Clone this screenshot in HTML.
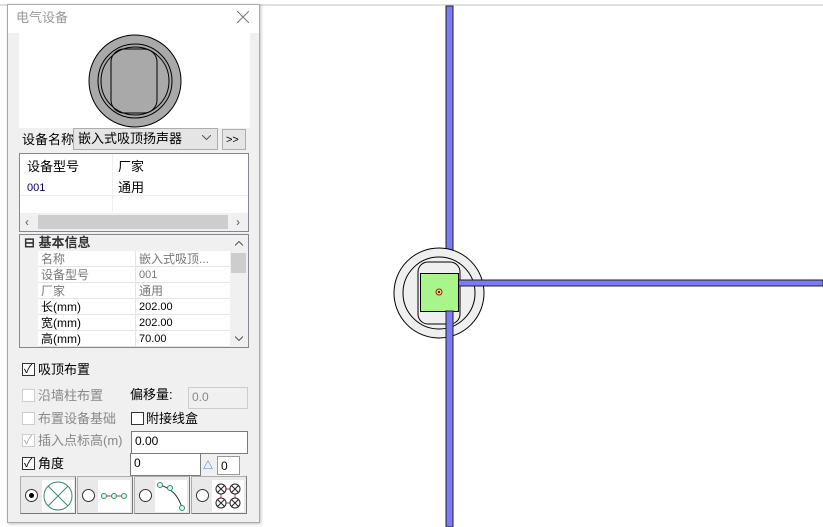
<!DOCTYPE html>
<html><head><meta charset="utf-8"><style>
*{margin:0;padding:0;box-sizing:border-box}
body{width:823px;height:527px;background:#fff;position:relative;overflow:hidden;font-family:"Liberation Sans","Noto Sans CJK SC",sans-serif;font-size:12px;color:#000}
.a{position:absolute}
.t{position:absolute;white-space:nowrap;line-height:16px}
.cb{position:absolute;width:13px;height:13px;border:1px solid #333;background:#fff}
.cbd{border-color:#ccc}
.inp{position:absolute;background:#fff;border:1px solid #7a7a7a;padding:2px 3px;font-size:12px;line-height:14px}
.btn{position:absolute;top:476px;height:38px;background:#e9e9e9;border:1px solid #adadad;border-right-color:#777;border-bottom-color:#777}
.rad{position:absolute;left:4px;top:12px;width:13px;height:13px;border:1px solid #333;border-radius:50%;background:#fff}
.row{position:absolute;left:18px;width:192px;height:16px;border-bottom:1px solid #e4e4e4;background:#fff}
</style></head><body>
<div class="a" style="left:0;top:4px;width:823px;height:2px;background:#e0e0e0"></div>
<!-- canvas drawing -->
<svg class="a" style="left:380px;top:0" width="443" height="527">
<rect x="66" y="6" width="7" height="521" fill="#7b7bf7" stroke="#222" stroke-width="1"/>
<circle cx="59" cy="293" r="45" fill="#efefef" stroke="#000" stroke-width="1"/>
<circle cx="59" cy="293" r="36" fill="none" stroke="#000" stroke-width="1"/>
<rect x="38" y="262" width="42" height="62" rx="10" fill="none" stroke="#000"/>
<rect x="73" y="280" width="370" height="6" fill="#7b7bf7" stroke="#222" stroke-width="1"/>
<rect x="40.5" y="273.5" width="38" height="38" fill="#a8f58c" stroke="#000"/>
<rect x="66" y="311" width="7" height="216" fill="#7b7bf7" stroke="#222" stroke-width="1"/>
<circle cx="59" cy="292" r="3" fill="none" stroke="#d00"/>
<circle cx="59" cy="292" r="1" fill="#000"/>
</svg>
<!-- panel -->
<div class="a" style="left:7px;top:4px;width:253px;height:519px;background:#f0f0f0;border:1px solid #aaa;box-shadow:1px 1px 3px rgba(0,0,0,.25)"></div>
<div class="a" style="left:8px;top:5px;width:251px;height:28px;background:#fff"></div>
<div class="t" style="left:16px;top:10px;font-size:13px;color:#999">电气设备</div>
<svg class="a" style="left:237px;top:11px" width="12" height="12"><path d="M0 0L12 12M12 0L0 12" stroke="#777" stroke-width="1"/></svg>
<div class="a" style="left:19px;top:33px;width:231px;height:95px;background:#fff"></div>
<svg class="a" style="left:88px;top:34px" width="94" height="94">
<circle cx="47" cy="47" r="46" fill="#a9a9a9" stroke="#000"/>
<circle cx="47" cy="47" r="37" fill="none" stroke="#000"/>
<circle cx="47" cy="47" r="34" fill="none" stroke="#000"/>
<rect x="23" y="15" width="46" height="64" rx="13" fill="none" stroke="#000"/>
</svg>
<div class="t" style="left:22px;top:132px;font-size:13px">设备名称</div>
<div class="a" style="left:73px;top:128px;width:145px;height:22px;background:#e5e5e5;border:1px solid #adadad"></div>
<div class="t" style="left:78px;top:131px;font-size:13px">嵌入式吸顶扬声器</div>
<svg class="a" style="left:202px;top:135px" width="9" height="6"><path d="M0 0L4.5 4.5L9 0" stroke="#555" fill="none"/></svg>
<div class="a" style="left:222px;top:129px;width:24px;height:21px;background:#e5e5e5;border:1px solid #adadad"></div>
<div class="t" style="left:226px;top:132px;font-size:11px">&gt;&gt;</div>
<!-- list -->
<div class="a" style="left:19px;top:153px;width:230px;height:79px;background:#fff;border:1px solid #828790"></div>
<div class="a" style="left:112px;top:154px;width:1px;height:58px;background:#eee"></div>
<div class="a" style="left:20px;top:195px;width:228px;height:1px;background:#eee"></div>
<div class="t" style="left:27px;top:159px;font-size:13px">设备型号</div>
<div class="t" style="left:118px;top:159px;font-size:13px">厂家</div>
<div class="t" style="left:27px;top:180px;font-size:11px;color:#000060">001</div>
<div class="t" style="left:118px;top:180px;font-size:13px">通用</div>
<div class="a" style="left:20px;top:213px;width:228px;height:18px;background:#f0f0f0"></div>
<div class="a" style="left:38px;top:215px;width:190px;height:14px;background:#cdcdcd"></div>
<div class="t" style="left:25px;top:214px;font-size:12px;color:#555">&lsaquo;</div>
<div class="t" style="left:236px;top:214px;font-size:12px;color:#555">&rsaquo;</div>
<!-- property grid -->
<div class="a" style="left:19px;top:234px;width:230px;height:114px;background:#f0f0f0;border:1px solid #828790;overflow:hidden">
<div class="t" style="left:4px;top:0;font-size:13px;font-weight:bold;color:#333">⊟ 基本信息</div>
<div class="row" style="top:16px"></div><div class="row" style="top:32px"></div><div class="row" style="top:48px"></div><div class="row" style="top:64px"></div><div class="row" style="top:80px"></div><div class="row" style="top:96px"></div>
<div class="a" style="left:115px;top:16px;width:1px;height:100px;background:#e4e4e4"></div>
<div class="t" style="left:21px;top:16px;color:#777">名称</div><div class="t" style="left:119px;top:16px;color:#777">嵌入式吸顶...</div>
<div class="t" style="left:21px;top:32px;color:#777">设备型号</div><div class="t" style="left:119px;top:32px;color:#777;font-size:11px">001</div>
<div class="t" style="left:21px;top:48px;color:#777">厂家</div><div class="t" style="left:119px;top:48px;color:#777">通用</div>
<div class="t" style="left:21px;top:64px">长(mm)</div><div class="t" style="left:119px;top:64px;font-size:11px">202.00</div>
<div class="t" style="left:21px;top:80px">宽(mm)</div><div class="t" style="left:119px;top:80px;font-size:11px">202.00</div>
<div class="t" style="left:21px;top:96px">高(mm)</div><div class="t" style="left:119px;top:96px;font-size:11px">70.00</div>
<div class="a" style="left:211px;top:18px;width:15px;height:20px;background:#cdcdcd"></div>
<svg class="a" style="left:215px;top:6px" width="8" height="5"><path d="M0 4.5L4 .5L8 4.5" stroke="#555" fill="none"/></svg>
<svg class="a" style="left:215px;top:101px" width="8" height="5"><path d="M0 .5L4 4.5L8 .5" stroke="#555" fill="none"/></svg>
</div>
<!-- checkboxes -->
<div class="cb" style="left:22px;top:363px"></div><div class="t" style="left:24px;top:361px;font-size:12px">✓</div>
<div class="t" style="left:38px;top:362px;font-size:13px">吸顶布置</div>
<div class="cb cbd" style="left:22px;top:389px"></div><div class="t" style="left:38px;top:388px;font-size:13px;color:#888">沿墙柱布置</div>
<div class="t" style="left:130px;top:387px;font-size:13px">偏移量:</div>
<div class="inp" style="left:188px;top:387px;width:60px;height:22px;border-color:#ccc;background:#f0f0f0;color:#888">0.0</div>
<div class="cb cbd" style="left:22px;top:412px"></div><div class="t" style="left:38px;top:411px;font-size:13px;color:#888">布置设备基础</div>
<div class="cb" style="left:131px;top:412px"></div><div class="t" style="left:146px;top:411px;font-size:13px">附接线盒</div>
<div class="cb cbd" style="left:22px;top:434px"></div><div class="t" style="left:24px;top:432px;color:#aaa">✓</div>
<div class="t" style="left:38px;top:433px;font-size:13px;color:#888">插入点标高(m)</div>
<div class="inp" style="left:131px;top:431px;width:117px;height:23px">0.00</div>
<div class="cb" style="left:22px;top:457px"></div><div class="t" style="left:24px;top:455px">✓</div>
<div class="t" style="left:38px;top:456px;font-size:13px">角度</div>
<div class="inp" style="left:130px;top:453px;width:71px;height:23px">0</div>
<div class="t" style="left:203px;top:459px;font-size:10px;color:#2255cc">△</div>
<div class="inp" style="left:217px;top:456px;width:23px;height:19px;border-color:#999">0</div>
<!-- buttons -->
<div class="btn" style="left:20px;width:56px"><div class="rad"><div style="position:absolute;left:3px;top:3px;width:5px;height:5px;border-radius:50%;background:#000"></div></div>
<svg class="a" style="left:21px;top:3px" width="32" height="32"><rect width="32" height="32" fill="#fff"/><circle cx="16" cy="16" r="14" fill="none" stroke="#3b8a6b"/><path d="M6 6L26 26M26 6L6 26" stroke="#3b8a6b"/></svg></div>
<div class="btn" style="left:77px;width:56px"><div class="rad"></div>
<svg class="a" style="left:20px;top:3px" width="32" height="32"><rect width="32" height="32" fill="#fff"/><path d="M6 16H26" stroke="#c33"/><circle cx="6" cy="16" r="2.5" fill="#cfe" stroke="#3b8a6b"/><circle cx="16" cy="16" r="2.5" fill="#cfe" stroke="#3b8a6b"/><circle cx="26" cy="16" r="2.5" fill="#cfe" stroke="#3b8a6b"/></svg></div>
<div class="btn" style="left:134px;width:56px"><div class="rad"></div>
<svg class="a" style="left:20px;top:3px" width="32" height="32"><rect width="32" height="32" fill="#fff"/><path d="M5 5Q22 10 27 28" stroke="#333" fill="none"/><circle cx="5" cy="5" r="2.5" fill="#cfe" stroke="#3b8a6b"/><circle cx="15" cy="8" r="2.5" fill="#cfe" stroke="#3b8a6b"/><circle cx="27" cy="28" r="2.5" fill="#cfe" stroke="#3b8a6b"/></svg></div>
<div class="btn" style="left:191px;width:56px"><div class="rad"></div>
<svg class="a" style="left:20px;top:3px" width="32" height="32"><rect width="32" height="32" fill="#fff"/><path d="M14 9H18M14 23H18M9 14V18M23 14V18" stroke="#c33"/><g fill="none" stroke="#222"><circle cx="9" cy="9" r="5"/><circle cx="23" cy="9" r="5"/><circle cx="9" cy="23" r="5"/><circle cx="23" cy="23" r="5"/><path d="M5.5 5.5L12.5 12.5M12.5 5.5L5.5 12.5M19.5 5.5L26.5 12.5M26.5 5.5L19.5 12.5M5.5 19.5L12.5 26.5M12.5 19.5L5.5 26.5M19.5 19.5L26.5 26.5M26.5 19.5L19.5 26.5"/></g></svg></div>
</body></html>
